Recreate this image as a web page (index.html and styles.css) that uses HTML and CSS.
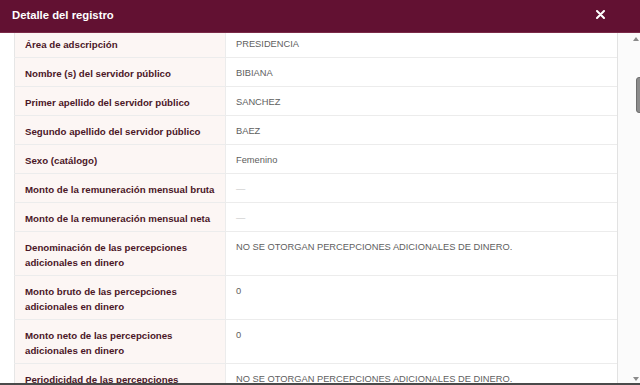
FILE: index.html
```html
<!DOCTYPE html>
<html lang="es">
<head>
    <meta charset="UTF-8">
    <meta name="viewport" content="width=device-width, initial-scale=1.0">
    <title>Detalle del registro</title>
    <link rel="stylesheet" href="styles.css">
</head>
<body>

    <!-- Modal -->
    <div class="modal">
        <div class="modal-header">
            <span class="modal-title">Detalle del registro</span>
            <span class="modal-close">
                <svg width="9" height="9" viewBox="0 0 9 9">
                    <path d="M1 1 L8 8 M8 1 L1 8" stroke="#ffffff" stroke-width="2" stroke-linecap="round"/>
                </svg>
            </span>
        </div>

        <div class="modal-body">
            <div class="modal-content">
                <table class="detail-table">
                    <tr><td class="label">Área de adscripción</td><td class="value">PRESIDENCIA</td></tr>
                    <tr><td class="label">Nombre (s) del servidor público</td><td class="value">BIBIANA</td></tr>
                    <tr><td class="label">Primer apellido del servidor público</td><td class="value">SANCHEZ</td></tr>
                    <tr><td class="label">Segundo apellido del servidor público</td><td class="value">BAEZ</td></tr>
                    <tr><td class="label">Sexo (catálogo)</td><td class="value">Femenino</td></tr>
                    <tr><td class="label">Monto de la remuneración mensual bruta</td><td class="value empty">—</td></tr>
                    <tr><td class="label">Monto de la remuneración mensual neta</td><td class="value empty">—</td></tr>
                    <tr><td class="label">Denominación de las percepciones adicionales en dinero</td><td class="value">NO SE OTORGAN PERCEPCIONES ADICIONALES DE DINERO.</td></tr>
                    <tr><td class="label">Monto bruto de las percepciones adicionales en dinero</td><td class="value">0</td></tr>
                    <tr><td class="label">Monto neto de las percepciones adicionales en dinero</td><td class="value">0</td></tr>
                    <tr><td class="label">Periodicidad de las percepciones adicionales en dinero</td><td class="value">NO SE OTORGAN PERCEPCIONES ADICIONALES DE DINERO.</td></tr>
                </table>
            </div>

            <!-- Scrollbar -->
            <div class="scrollbar">
                <span class="scroll-arrow up"></span>
                <span class="scroll-thumb"></span>
                <span class="scroll-arrow down"></span>
            </div>
        </div>
    </div>

</body>
</html>
```

FILE: styles.css
```css
body {
    font-family: "Liberation Sans", Arial, sans-serif;
    margin: 0;
    padding: 0;
    background: #ffffff;
}

.modal {
    height: 385px;
    display: flex;
    flex-direction: column;
    box-sizing: border-box;
    border-bottom: 2px solid #4a4a4a;
    overflow: hidden;
}

.modal-header {
    height: 33px;
    flex-shrink: 0;
    background: #621132;
    display: flex;
    align-items: center;
    justify-content: space-between;
    padding: 0 35px 0 12px;
    box-sizing: border-box;
    border-bottom: 1px solid #7a2a48;
}

.modal-title {
    color: #ffffff;
    font-size: 11.3px;
    font-weight: bold;
    margin-top: -2px;
}

.modal-close {
    display: flex;
    margin-top: -4px;
}

.modal-body {
    flex: 1;
    display: flex;
    overflow: hidden;
}

.modal-content {
    flex: 1;
    padding-left: 14px;
    overflow: hidden;
}

.detail-table {
    width: 100%;
    border-collapse: collapse;
    margin-top: -4px;
    border-left: 1px solid #e6e6e6;
}

.detail-table td {
    padding: 8px 6px 5px 10px;
    line-height: 15px;
    vertical-align: top;
    border-bottom: 1px solid #ececec;
}

.label {
    width: 194px;
    background: #fcf6f4;
    color: #4b1727;
    font-size: 9.7px;
    font-weight: bold;
}

.value {
    border-left: 1px solid #ececec;
    color: #5e5e5e;
    font-size: 9.3px;
}

.value.empty {
    color: #c4c4c4;
}

.scrollbar {
    width: 22px;
    flex-shrink: 0;
    border-left: 1px solid #e2e2e2;
    background: #fbfbfb;
    position: relative;
}

.scroll-arrow {
    position: absolute;
    right: 1px;
    width: 0;
    height: 0;
    border-left: 3px solid transparent;
    border-right: 3px solid transparent;
}

.scroll-arrow.up {
    top: 4px;
    border-bottom: 4px solid #8a8a8a;
}

.scroll-arrow.down {
    bottom: 2px;
    border-top: 4px solid #8a8a8a;
}

.scroll-thumb {
    position: absolute;
    top: 44px;
    left: 18px;
    width: 8px;
    height: 34px;
    border-radius: 3px;
    background: #8c8c8c;
    border: 1px solid #6e6e6e;
}
```
